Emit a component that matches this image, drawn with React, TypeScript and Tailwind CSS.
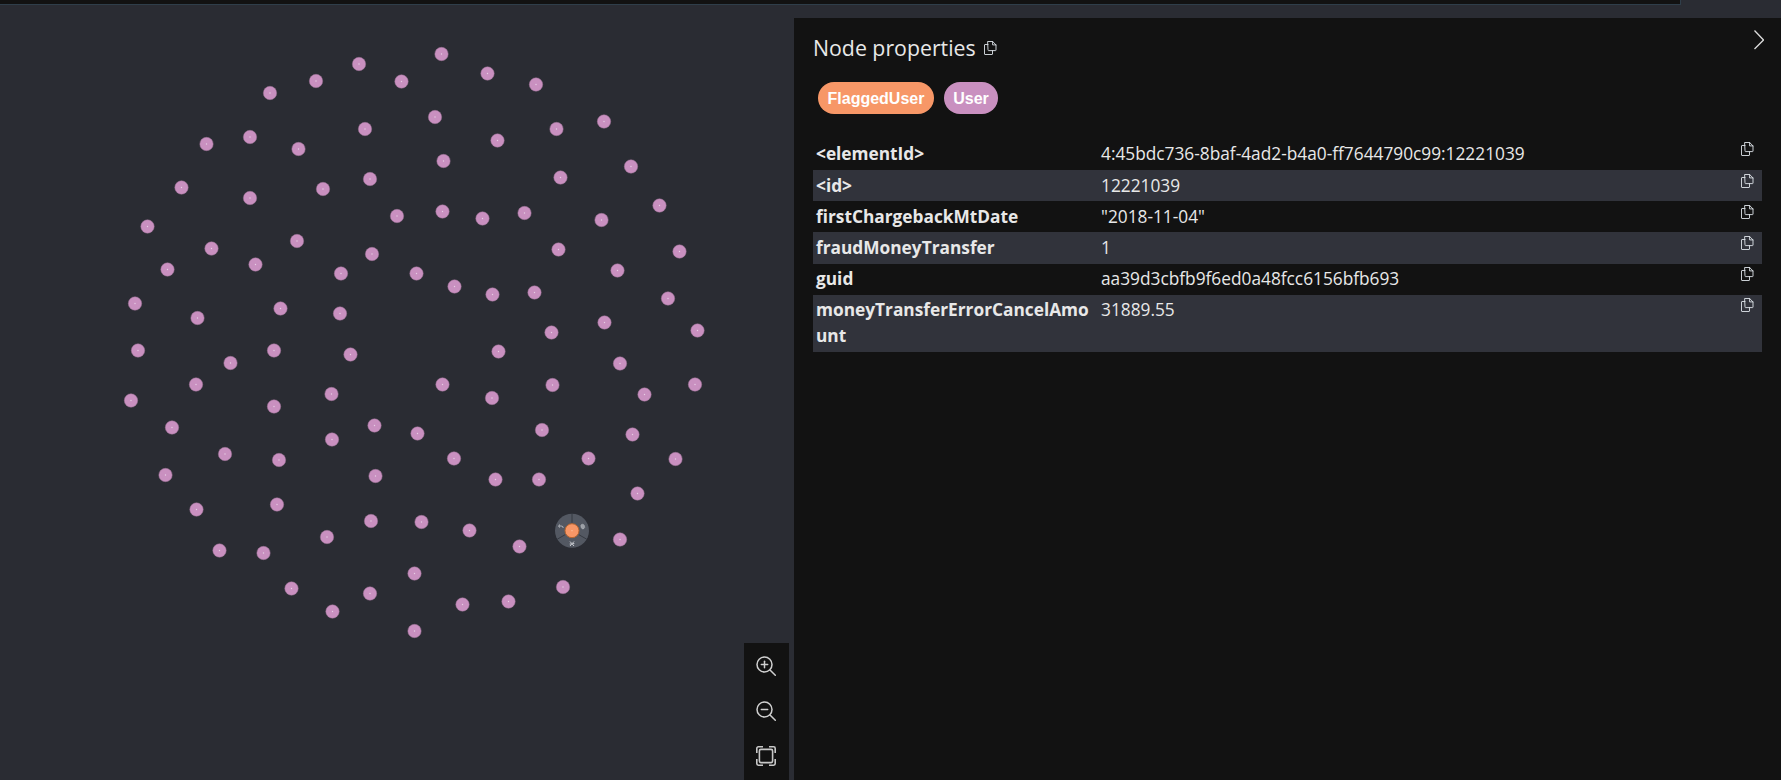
import { Fragment } from "react";

const nodes: [number, number][] = [
  [359, 64], [316, 81], [401.5, 81.5], [270, 93], [365, 129], [250, 137], [206.5, 144], [298.5, 149],
  [370, 179], [323, 189], [181.5, 187.5], [250, 198], [397, 216], [147.5, 226.5], [297, 241], [211.5, 248.5],
  [372, 254], [255.5, 264.5], [341, 273.5], [167.5, 269.5], [135, 303.5], [197.5, 318], [280.5, 308.5], [340, 313.5],
  [138, 350.5], [274, 350.5], [350.5, 354.5], [230.5, 363], [441.5, 54], [487.5, 73.5], [536, 84.5], [435, 117],
  [604, 121.5], [556.5, 129], [497.5, 140.5], [443.5, 161], [631, 166.5], [560.5, 177.5], [659.5, 205.5], [442.5, 211.5],
  [524.5, 213], [482.5, 218.5], [601.5, 220], [558.5, 249.5], [679.5, 251.5], [617.5, 270.5], [416.5, 273.5], [454.5, 286.5],
  [492.5, 294.5], [534.5, 292.5], [668, 298.5], [604.5, 322.5], [551.5, 332.5], [697.5, 330.5], [498.5, 351.5], [620, 363.5],
  [196, 384.5], [331.5, 394], [131, 400.5], [274, 406.5], [374.5, 425.5], [172, 427.5], [332, 439.5], [225, 454],
  [279, 460], [375.5, 476], [165.5, 475], [196.5, 509.5], [277, 504.5], [371, 521], [327, 537], [219.5, 550.5],
  [263.5, 553], [291.5, 588.5], [370, 593.5], [332.5, 611.5], [442.5, 384.5], [552.5, 385], [695, 384.5], [492, 398],
  [644.5, 394.5], [542, 430], [417.5, 433.5], [632.5, 434.5], [454, 458.5], [588.5, 458.5], [675.5, 459], [495.5, 479.5],
  [539, 479.5], [637.5, 493.5], [421.5, 522], [469.5, 530.5], [519.5, 546.5], [620, 539.5], [414.5, 573.5], [563, 587],
  [508.5, 601.5], [462.5, 604.5], [414.5, 631],
];

const rows = [
  { k: "<elementId>", v: "4:45bdc736-8baf-4ad2-b4a0-ff7644790c99:12221039" },
  { k: "<id>", v: "12221039" },
  { k: "firstChargebackMtDate", v: '"2018-11-04"' },
  { k: "fraudMoneyTransfer", v: "1" },
  { k: "guid", v: "aa39d3cbfb9f6ed0a48fcc6156bfb693" },
  { k: "moneyTransferErrorCancelAmount", v: "31889.55" },
];

function CopyIcon() {
  return (
    <svg width="13" height="14" viewBox="0 0 13 14" fill="none" stroke="#dfe4ea" strokeWidth="0.9" strokeLinejoin="round" strokeLinecap="round">
      <path d="M4 .5h4.6L12 3.9v5.2a.5.5 0 0 1-.5.5H4.5a.5.5 0 0 1-.5-.5z" />
      <path d="M8.6.5v3.4H12" />
      <path d="M4 3.5H1a.5.5 0 0 0-.5.5v9a.5.5 0 0 0 .5.5h7a.5.5 0 0 0 .5-.5v-3.4" />
    </svg>
  );
}

function ZoomIcon({ minus }: { minus?: boolean }) {
  return (
    <svg width="20" height="20" viewBox="0 0 20 20" fill="none" stroke="#cfcfcf" strokeWidth="1.5" strokeLinecap="round">
      <circle cx="8.5" cy="8.5" r="7.5" />
      <path d="M14 14l5.3 5.3" />
      <path d="M5.3 8.5h6.4" />
      {!minus && <path d="M8.5 5.3v6.4" />}
    </svg>
  );
}

function FitIcon() {
  return (
    <svg width="20" height="20" viewBox="0 0 20 20" fill="none" stroke="#c8c8c8" strokeWidth="1.6">
      <rect x="3.4" y="3.4" width="13.2" height="13.2" rx="1.5" />
      <path d="M.8 7V2.4A1.6 1.6 0 0 1 2.4 .8H7M13 .8h4.6a1.6 1.6 0 0 1 1.6 1.6V7M19.2 13v4.6a1.6 1.6 0 0 1-1.6 1.6H13M7 19.2H2.4a1.6 1.6 0 0 1-1.6-1.6V13" />
    </svg>
  );
}

function Graph() {
  return (
    <svg width="794" height="762" viewBox="0 18 794 762" className="block">
      {nodes.map(([x, y], i) => (
        <Fragment key={i}>
          <circle cx={x} cy={y} r="6.7" fill="#c990c0" stroke="#9d7397" strokeWidth="0.5" />
          <circle cx={x} cy={y} r="0.7" fill="#e8cfe4" />
        </Fragment>
      ))}
      {/* selected node with its ring menu */}
      <circle cx="572" cy="530.7" r="17" fill="#535862" />
      <path d="M572 513.7v9M557.3 539.2l7.8-4.5M586.7 539.2l-7.8-4.5" stroke="#2f323a" strokeWidth="0.8" />
      <path d="M560 524.5l-1.6 1.6 1.6 1.4M559 526h2.2a2 2 0 0 1 2 2" fill="none" stroke="#c9ccd1" strokeWidth="0.8" />
      <path d="M581.5 524.5a2 2 0 0 1 3 1.6 2 2 0 0 1-.8 2.6 1.8 1.8 0 0 1-2.6-1.6 2 2 0 0 1 .4-2.6z" fill="#9ca0a7" stroke="#c9ccd1" strokeWidth="0.4" />
      <path d="M570 541.5l4 4.5M574 541.5l-4 4.5M569.7 544h1.3M573 543.6h1.3" fill="none" stroke="#d6d8dc" strokeWidth="0.9" />
      <circle cx="572" cy="530.7" r="7" fill="#f79767" stroke="#b5642f" strokeWidth="1" />
      <circle cx="572" cy="530.7" r="0.6" fill="#fbc7a8" />
    </svg>
  );
}

export default function App() {
  return (
    <div className="flex h-[780px] w-[1781px] flex-col overflow-hidden bg-[#2a2c33] font-['Open_Sans','Noto_Sans',sans-serif] text-[#e8e8e8]">
      <div className="flex h-[18px] shrink-0">
        <div className="h-[5px] w-[1681px] border-r border-b border-[#2f3e4a] bg-[#121212]" />
      </div>
      <div className="flex min-h-0 flex-1">
        <div className="relative w-[794px] shrink-0">
          <Graph />
          <div className="absolute right-[5px] bottom-0 flex h-[137px] w-[45px] flex-col items-center gap-[25px] bg-[#121212] pt-[13px] pr-[1px]">
            <ZoomIcon />
            <ZoomIcon minus />
            <FitIcon />
          </div>
        </div>
        <div className="relative flex-1 bg-[#121212] pt-[16px] pr-[19px] pl-[19px]">
          <button className="absolute top-[12px] right-[17px] text-[#dcdcdc]">
            <svg width="10" height="20" viewBox="0 0 10 20" fill="none" stroke="currentColor" strokeWidth="1.3" className="block">
              <path d="M.5 .5l9 9.5-9 9" />
            </svg>
          </button>
          <div className="flex h-[28px] items-center gap-[8px] text-[21.3px] leading-[28px]">
            <span>Node properties</span>
            <CopyIcon />
          </div>
          <div className="mt-[20px] flex gap-[10px] pl-[5px] font-['Liberation_Sans',sans-serif] text-[16px] font-bold text-white">
            <span className="flex h-[32px] w-[116px] items-center justify-center rounded-full bg-[#f79767] pt-[1px]">FlaggedUser</span>
            <span className="flex h-[32px] w-[54px] items-center justify-center rounded-full bg-[#c990c0] pt-[1px]">User</span>
          </div>
          <div className="mt-[25px] text-[17.3px] leading-[26.15px]">
            {rows.map((r, i) => (
              <div key={r.k} className={`flex pt-[2.4px] pb-[2.6px] pl-[3px] ${i % 2 === 1 ? "bg-[#31333b]" : ""}`}>
                <div className="w-[285px] shrink-0 pr-[8px] font-bold break-all">{r.k}</div>
                <div className="flex-1">{r.v}</div>
                <div className="pt-[1px] pr-[8px]">
                  <CopyIcon />
                </div>
              </div>
            ))}
          </div>
        </div>
      </div>
    </div>
  );
}
